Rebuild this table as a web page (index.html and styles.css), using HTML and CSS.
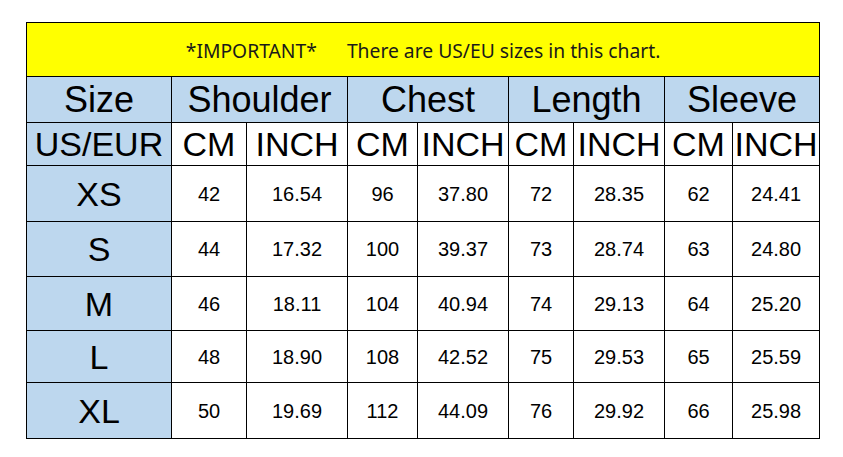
FILE: index.html
```html
<!DOCTYPE html>
<html>
<head>
<meta charset="utf-8">
<link rel="stylesheet" href="styles.css">
</head>
<body>
<div class="wrap">
<table class="chart">
  <colgroup>
    <col class="c-size">
    <col class="c-sh-cm"><col class="c-sh-in">
    <col class="c-ch-cm"><col class="c-ch-in">
    <col class="c-le-cm"><col class="c-le-in">
    <col class="c-sl-cm"><col class="c-sl-in">
  </colgroup>
  <tr class="r-note"><td colspan="9" class="note">*IMPORTANT*      There are US/EU sizes in this chart.</td></tr>
  <tr class="r-head"><td class="head">Size</td><td colspan="2" class="head">Shoulder</td><td colspan="2" class="head">Chest</td><td colspan="2" class="head">Length</td><td colspan="2" class="head">Sleeve</td></tr>
  <tr class="r-unit"><td class="unit blue">US/EUR</td><td class="unit">CM</td><td class="unit">INCH</td><td class="unit">CM</td><td class="unit">INCH</td><td class="unit">CM</td><td class="unit">INCH</td><td class="unit">CM</td><td class="unit">INCH</td></tr>
  <tr class="r-xs"><td class="size">XS</td><td>42</td><td>16.54</td><td>96</td><td>37.80</td><td>72</td><td>28.35</td><td>62</td><td>24.41</td></tr>
  <tr class="r-s"><td class="size">S</td><td>44</td><td>17.32</td><td>100</td><td>39.37</td><td>73</td><td>28.74</td><td>63</td><td>24.80</td></tr>
  <tr class="r-m"><td class="size">M</td><td>46</td><td>18.11</td><td>104</td><td>40.94</td><td>74</td><td>29.13</td><td>64</td><td>25.20</td></tr>
  <tr class="r-l"><td class="size">L</td><td>48</td><td>18.90</td><td>108</td><td>42.52</td><td>75</td><td>29.53</td><td>65</td><td>25.59</td></tr>
  <tr class="r-xl"><td class="size">XL</td><td>50</td><td>19.69</td><td>112</td><td>44.09</td><td>76</td><td>29.92</td><td>66</td><td>25.98</td></tr>
</table>
</div>
</body>
</html>
```

FILE: styles.css
```css
html, body {
  margin: 0;
  padding: 0;
  background: #ffffff;
}
.wrap {
  padding: 22px 0 0 26px;
}
.chart {
  border-collapse: collapse;
  table-layout: fixed;
  width: 794px;
  font-family: "Liberation Sans", Arial, sans-serif;
  color: #000;
}
.chart td {
  border: 1px solid #000;
  text-align: center;
  vertical-align: middle;
  padding: 0;
  font-size: 20px;
  line-height: 1;
  overflow: hidden;
  white-space: nowrap;
}
.c-size { width: 145px; }
.c-sh-cm { width: 75px; }
.c-sh-in { width: 101px; }
.c-ch-cm { width: 70px; }
.c-ch-in { width: 91px; }
.c-le-cm { width: 65px; }
.c-le-in { width: 91px; }
.c-sl-cm { width: 68px; }
.c-sl-in { width: 87px; }

.r-note { height: 54px; }
.r-head { height: 46px; }
.r-unit { height: 43px; }
.r-xs { height: 56px; }
.r-s { height: 55px; }
.r-m { height: 54px; }
.r-l { height: 52px; }
.r-xl { height: 56px; }

.chart td.note {
  background: #ffff00;
  font-family: "Noto Sans", "Noto Sans CJK SC", sans-serif;
  font-size: 19.3px;
  color: #1a1a1a;
  white-space: pre;
  padding-top: 3px;
}
.chart td.head {
  background: #bdd7ee;
  font-size: 36px;
}
.chart td.unit {
  font-size: 34px;
}
.chart td.blue,
.chart td.size {
  background: #bdd7ee;
}
.chart td.size {
  font-size: 34px;
}
```
